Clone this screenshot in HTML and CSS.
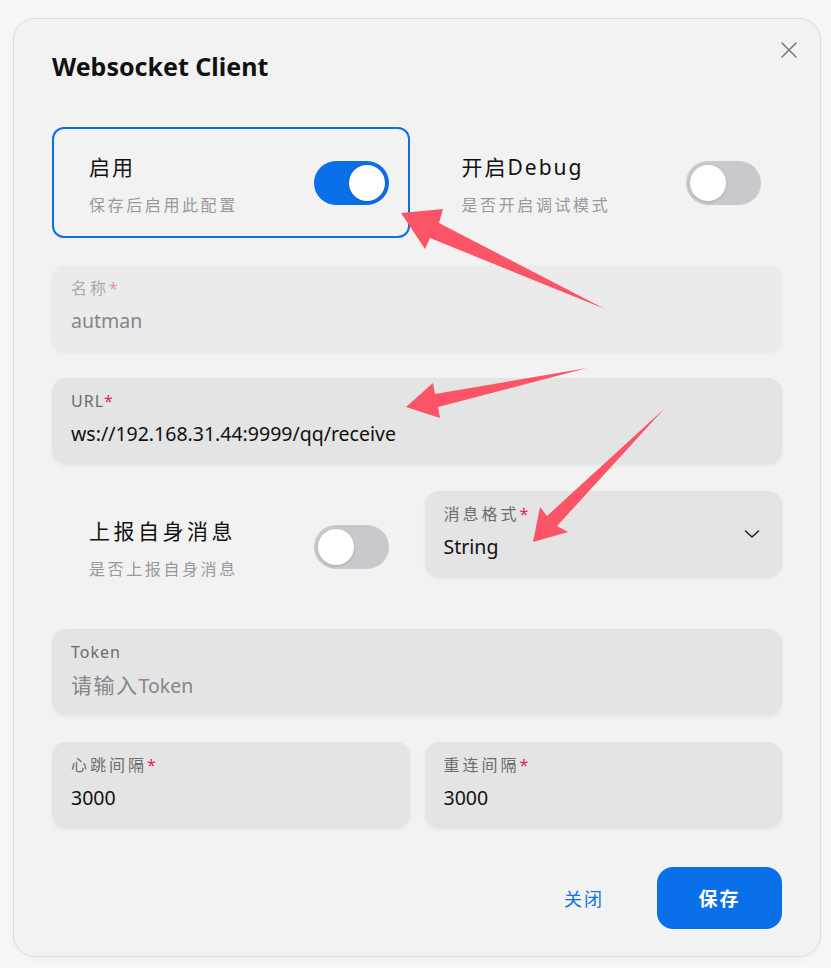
FILE: index.html
```html
<!DOCTYPE html>
<html lang="zh-CN">
<head>
    <meta charset="UTF-8">
    <meta name="viewport" content="width=device-width, initial-scale=1.0">
    <title>Websocket Client</title>
    <link rel="stylesheet" href="styles.css">
</head>
<body>
    <div class="modal">
        <div class="modal-header">
            <h1 class="modal-title">Websocket Client</h1>
            <button class="close-btn" aria-label="close">
                <svg width="18" height="18" viewBox="0 0 18 18">
                    <path d="M2 2 L16 16 M16 2 L2 16" stroke="#7a7a80" stroke-width="1.6" stroke-linecap="round"/>
                </svg>
            </button>
        </div>

        <div class="form-grid">
            <!-- 开关 -->
            <div class="switch-card active">
                <div class="switch-text">
                    <div class="switch-title">启用</div>
                    <div class="switch-desc">保存后启用此配置</div>
                </div>
                <div class="toggle on"><span class="knob"></span></div>
            </div>
            <div class="switch-card">
                <div class="switch-text">
                    <div class="switch-title">开启Debug</div>
                    <div class="switch-desc">是否开启调试模式</div>
                </div>
                <div class="toggle"><span class="knob"></span></div>
            </div>

            <div class="field wide disabled">
                <div class="field-label"><span class="cjk">名称</span><span class="req">*</span></div>
                <div class="field-value">autman</div>
            </div>

            <div class="field wide">
                <div class="field-label">URL<span class="req">*</span></div>
                <div class="field-value">ws://192.168.31.44:9999/qq/receive</div>
            </div>

            <div class="switch-card">
                <div class="switch-text">
                    <div class="switch-title wide-cjk">上报自身消息</div>
                    <div class="switch-desc">是否上报自身消息</div>
                </div>
                <div class="toggle"><span class="knob"></span></div>
            </div>
            <div class="field select">
                <div class="field-label"><span class="cjk">消息格式</span><span class="req">*</span></div>
                <div class="field-value">String</div>
                <svg class="chevron" width="16" height="10" viewBox="0 0 16 10">
                    <path d="M1.5 2 L8 8 L14.5 2" fill="none" stroke="#222" stroke-width="1.6" stroke-linecap="round" stroke-linejoin="round"/>
                </svg>
            </div>

            <div class="field wide">
                <div class="field-label">Token</div>
                <div class="field-value placeholder"><span class="cjk">请输入</span>Token</div>
            </div>

            <div class="field">
                <div class="field-label"><span class="cjk">心跳间隔</span><span class="req">*</span></div>
                <div class="field-value">3000</div>
            </div>
            <div class="field">
                <div class="field-label"><span class="cjk">重连间隔</span><span class="req">*</span></div>
                <div class="field-value">3000</div>
            </div>
        </div>

        <div class="modal-footer">
            <button class="btn-text">关闭</button>
            <button class="btn-primary">保存</button>
        </div>
    </div>

    <!-- 标注箭头 -->
    <svg class="arrows" width="831" height="968" viewBox="0 0 831 968">
        <polygon points="401,213 443,209 439,223 605,309 430,238 425,249"/>
        <polygon points="406,407 433,383 435,394 587,368 438,407 440,418"/>
        <polygon points="533,542 540,507 547,516 664,409 557,526 568,532"/>
    </svg>
</body>
</html>
```

FILE: styles.css
```css
* {
    box-sizing: border-box;
}

body {
    margin: 0;
    background-color: #f7f7f7;
    font-family: "Noto Sans", "Noto Sans CJK SC", sans-serif;
    color: #111;
    position: relative;
    width: 831px;
    height: 968px;
    overflow: hidden;
}

.modal {
    position: absolute;
    left: 13px;
    top: 18px;
    width: 808px;
    height: 939px;
    background-color: #f2f2f2;
    border: 1px solid #dcdcdc;
    border-radius: 22px;
    box-shadow: 0 2px 10px rgba(0, 0, 0, 0.04);
    padding: 0 38px;
}

.modal-header {
    padding-top: 31px;
    margin-bottom: 45px;
}

.modal-title {
    margin: 0;
    font-size: 25px;
    line-height: 32px;
    font-weight: 700;
    color: #111;
}

.close-btn {
    position: absolute;
    top: 22px;
    right: 22px;
    border: none;
    background: none;
    padding: 0;
    width: 18px;
    height: 18px;
    cursor: pointer;
}

.form-grid {
    display: grid;
    grid-template-columns: 1fr 1fr;
    column-gap: 15px;
    row-gap: 27px;
    align-items: start;
}

.switch-card {
    height: 111px;
    border: 2px solid transparent;
    border-radius: 12px;
    display: flex;
    align-items: center;
    justify-content: space-between;
    padding: 0 19px 0 35px;
}

.switch-card.active {
    border-color: #0a6fe8;
}

.switch-text {
    margin-top: 4px;
}

.switch-title {
    font-size: 21px;
    line-height: 28px;
    letter-spacing: 2px;
    color: #111;
}

.switch-title.wide-cjk {
    letter-spacing: 3.5px;
}

.switch-desc {
    margin-top: 12px;
    font-size: 16px;
    line-height: 24px;
    letter-spacing: 2.6px;
    color: #98989e;
}

.toggle {
    width: 75px;
    height: 44px;
    border-radius: 22px;
    background-color: #c9c8cd;
    padding: 4px;
    display: flex;
    justify-content: flex-start;
    flex-shrink: 0;
}

.toggle.on {
    background-color: #0a6fe8;
    justify-content: flex-end;
}

.knob {
    width: 36px;
    height: 36px;
    border-radius: 50%;
    background-color: #fff;
    box-shadow: 0 1px 3px rgba(0, 0, 0, 0.15);
}

.field {
    position: relative;
    height: 86px;
    background-color: #e4e4e4;
    border-radius: 14px;
    padding: 12px 19px 0;
    box-shadow: 0 2px 4px rgba(0, 0, 0, 0.05);
}

.field.wide {
    grid-column: 1 / 3;
}

.field-label {
    font-size: 16px;
    line-height: 22px;
    letter-spacing: 1px;
    color: #6c6b73;
}

.field-label .cjk {
    letter-spacing: 3px;
}

.req {
    color: #e8215a;
}

.field-value {
    margin-top: 9px;
    font-size: 19.5px;
    line-height: 26px;
    color: #111;
}

.field-value.placeholder {
    color: #86858c;
}

.field-value .cjk {
    font-size: 21px;
    letter-spacing: 1.5px;
}

.field.disabled {
    background-color: #ebebeb;
}

.field.disabled .field-label {
    color: #a9a9ad;
}

.field.disabled .req {
    color: #f08cb0;
}

.field.disabled .field-value {
    color: #85858a;
}

.chevron {
    position: absolute;
    right: 22px;
    top: 38px;
}

.modal-footer {
    display: flex;
    justify-content: flex-end;
    align-items: center;
    margin-top: 39px;
}

.btn-text {
    border: none;
    background: none;
    font-family: inherit;
    font-size: 18px;
    letter-spacing: 2px;
    color: #1670e0;
    padding: 0 20px;
    margin-right: 33px;
    cursor: pointer;
}

.btn-primary {
    width: 125px;
    height: 62px;
    border: none;
    border-radius: 16px;
    background-color: #0a70ea;
    color: #fff;
    font-family: inherit;
    font-size: 19px;
    font-weight: 700;
    letter-spacing: 2px;
    cursor: pointer;
}

.arrows {
    position: absolute;
    left: 0;
    top: 0;
    pointer-events: none;
}

.arrows polygon {
    fill: #fb5467;
}
```
